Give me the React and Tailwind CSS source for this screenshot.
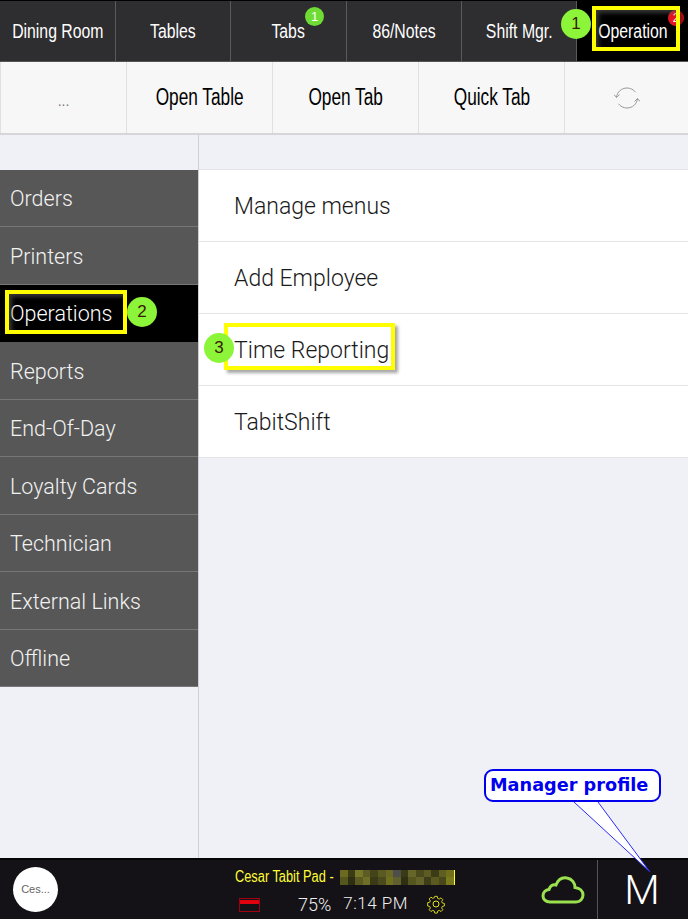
import React from "react";

const tabs = ["Dining Room", "Tables", "Tabs", "86/Notes", "Shift Mgr."];
const actions = ["Open Table", "Open Tab", "Quick Tab"];
const side = ["Orders", "Printers", "Operations", "Reports", "End-Of-Day", "Loyalty Cards", "Technician", "External Links", "Offline"];
const rows = ["Manage menus", "Add Employee", "Time Reporting", "TabitShift"];
const sans = "font-['Liberation_Sans',sans-serif]";
const light = "font-['Roboto',sans-serif] font-light";
const mosaic = [
  "#6a6a20", "#3c3c14", "#77772a", "#5c5c24", "#44441a", "#5a5a22", "#6a6a26", "#4d4d4a", "#3a3a18", "#66662a", "#4a4a1c", "#5c5c24", "#3b3b16", "#5e5e22", "#6f6f1c",
  "#55551e", "#2e2e12", "#5a5a22", "#6e6e26", "#3a3a16", "#4a4a1e", "#70701f", "#5f5f30", "#2f2f12", "#55551f", "#62622a", "#3d3d18", "#5a5a20", "#48481b", "#7a7a1c",
];

function Step({ n, className }) {
  return (
    <div className={"absolute w-[30px] h-[30px] rounded-full bg-[#8cf53a] flex items-center justify-center text-[17px] text-[#3a1a00] " + sans + " " + className}>{n}</div>
  );
}

function Box({ className }) {
  return <div className={"absolute border-4 border-[#ffff00] " + className} />;
}

function Narrow({ children, className = "text-[20px] scale-x-[0.79]" }) {
  return <span className={"inline-block whitespace-nowrap " + sans + " " + className}>{children}</span>;
}

export default function App() {
  return (
    <div className="relative w-[688px] h-[919px] overflow-hidden bg-[#f0f0f7] flex flex-col">
      <div className="h-[62px] shrink-0 flex pl-[1px] bg-[#2e2d30] border-t border-black border-b border-b-[#555]">
        {tabs.map((t) => (
          <div key={t} className="w-[115.2px] shrink-0 flex items-center justify-center border-r border-[#5a5a5c] text-white">
            <Narrow>{t}</Narrow>
          </div>
        ))}
        <div className="flex-1 bg-black flex items-center justify-center text-white">
          <Narrow>Operation</Narrow>
        </div>
      </div>

      <div className="h-[73px] shrink-0 flex bg-[#f7f7f7] border-b-2 border-[#d6d6d6] text-black">
        <div className="w-[127px] border-x border-[#e0e0e0] flex items-center justify-center pt-[8px] text-[#777] text-[14px]"><span className={sans}>...</span></div>
        {actions.map((t) => (
          <div key={t} className="w-[146px] border-r border-[#e0e0e0] flex items-center justify-center">
            <Narrow className="text-[23px] scale-x-[0.75]">{t}</Narrow>
          </div>
        ))}
        <div className="flex-1 flex items-center justify-center">
          <svg width="26" height="24" viewBox="0 0 26 24" fill="none" stroke="#999" strokeWidth="1">
            <path d="M2.500 11.500C3 6 7.500 2 13 2c3.500 0 6.500 1.600 8.500 4.200" />
            <path d="M23.500 12.500C23 18 18.500 22 13 22c-3.500 0-6.500-1.600-8.500-4.200" />
            <path d="M0 8.500l2.500 3 3-3M20.500 15.500l3-3 2.500 3" />
          </svg>
        </div>
      </div>

      <div className="flex-1 flex min-h-0">
        <div className="w-[199px] shrink-0 border-r border-[#d0d0d4] pt-[34.5px]">
          {side.map((s) => (
            <div key={s} className={"h-[57.5px] flex items-center pl-[10px] pt-[3px] border-b border-[#777] text-[21.5px] " + light + " " + (s === "Operations" ? "bg-black text-white border-b-black" : "bg-[#575757] text-[#f2f2f2]")}>
              {s}
            </div>
          ))}
        </div>
        <div className="flex-1 pt-[34px]">
          <div className="bg-white border-t border-[#e4e4e8]">
            {rows.map((r) => (
              <div key={r} className={"h-[72px] flex items-center pl-[35px] pt-[3px] border-b border-[#e4e4e8] text-[23px] text-[#1a1a1a] " + light}>
                {r}
              </div>
            ))}
          </div>
        </div>
      </div>

      <div className="h-[61px] shrink-0 bg-[#141216] border-t-2 border-[#050505] flex items-stretch relative">
        <div className="w-[232px] shrink-0 flex items-center pl-[13px]">
          <div className={"w-[45px] h-[45px] rounded-full bg-white flex items-center justify-center text-[11px] text-[#666] " + sans}>Ces...</div>
        </div>
        <div className="w-[300px] shrink-0 flex flex-col pt-[8px]">
          <div className="flex items-center h-[18px] pl-[3px]">
            <span className={"text-[#ffff33] text-[16px] whitespace-nowrap scale-x-[0.8] origin-left inline-block w-[105px] " + sans}>Cesar Tabit Pad -</span>
            <div className="w-[115px] h-[15px] grid grid-cols-[repeat(15,1fr)] grid-rows-2 border-r border-[#ffff33]">
              {mosaic.map((c, i) => (
                <div key={i} style={{ backgroundColor: c }} />
              ))}
            </div>
          </div>
          <div className="flex items-center mt-[7px] h-[22px] relative">
            <div className="ml-[7px] mt-[1px] w-[21px] h-[14px] border border-[#a00010] flex flex-col">
              <div className="h-[4px] mt-[1px] bg-[#e00010]" />
            </div>
            <span className={"ml-[38px] text-[18px] text-[#eee] whitespace-nowrap " + light}>75%</span>
            <span className={"ml-[12px] text-[17px] tracking-[0.5px] text-[#eee] whitespace-nowrap " + light}>7:14 PM</span>
            <svg className="ml-[18px]" width="20" height="20" viewBox="0 0 20 20" fill="none" stroke="#e6e620" strokeWidth="1">
              <circle cx="10" cy="10" r="3" />
              <path d="M8.600 1.500h2.800l.5 2.300 1.700.7 2-1.300 2 2-1.300 2 .7 1.700 2.300.5v2.800l-2.300.5-.7 1.700 1.300 2-2 2-2-1.300-1.700.7-.5 2.300H8.600l-.5-2.300-1.700-.7-2 1.300-2-2 1.300-2-.7-1.700-2.300-.5V8.600l2.300-.5.7-1.700-1.300-2 2-2 2 1.300 1.700-.7z" transform="translate(1 1) scale(0.9)" />
            </svg>
          </div>
        </div>
        <div className="flex-1 flex items-center pl-[9px]">
          <svg width="44" height="32" viewBox="0 0 44 32" fill="none" stroke="#9be04f" strokeWidth="3">
            <path d="M9 28C4.500 28 2 25 2 22c0-3.500 2.500-6 6-6.500C9 12 12 10 15 11c2-5 6-8 11-7 5 .8 8 5 8 9.500 4.500.5 8 3.500 8 7.500 0 4-3 7-7 7z" />
          </svg>
        </div>
        <div className={"w-[91px] shrink-0 border-l border-[#555] flex items-center justify-center pr-[2px] pt-[3px] text-white text-[41px] " + light}>M</div>
      </div>

      <div className="absolute left-[305px] top-[7px] w-[19px] h-[19px] rounded-full bg-[#6fdc35] flex items-center justify-center text-white text-[13px]"><span className={sans}>1</span></div>
      <div className="absolute left-[668px] top-[10px] w-[16px] h-[16px] rounded-full bg-[#e5141f] flex items-center justify-center text-white text-[12px] overflow-hidden"><span className={sans}>2</span></div>

      <Box className="left-[592px] top-[6px] w-[88px] h-[45px] shadow-[3px_3px_3px_rgba(0,0,0,0.45),inset_3px_3px_4px_rgba(90,90,90,0.6)]" />
      <Step n="1" className="left-[561px] top-[9px]" />
      <Box className="left-[5px] top-[290px] w-[122px] h-[44px] shadow-[3px_3px_3px_rgba(0,0,0,0.45),inset_3px_3px_4px_rgba(90,90,90,0.6)]" />
      <Step n="2" className="left-[127px] top-[297px]" />
      <Box className="left-[224px] top-[323px] w-[171px] h-[47px] shadow-[3px_3px_3px_rgba(0,0,0,0.35)]" />
      <Step n="3" className="left-[204px] top-[333px]" />

      <svg className="absolute left-[560px] top-[800px]" width="100" height="74" viewBox="0 0 100 74" fill="none">
        <path d="M14 2L90 72 L38 2" fill="#fff" stroke="#2a2aff" strokeWidth="1" />
      </svg>
      <div className="absolute left-[484px] top-[769px] w-[177px] h-[33px] rounded-[9px] border-2 border-[#0000ee] bg-white flex items-center pl-[4px] text-[#0000ee] text-[17.7px] font-bold whitespace-nowrap font-['DejaVu_Sans',sans-serif]">
        Manager profile
      </div>
    </div>
  );
}
